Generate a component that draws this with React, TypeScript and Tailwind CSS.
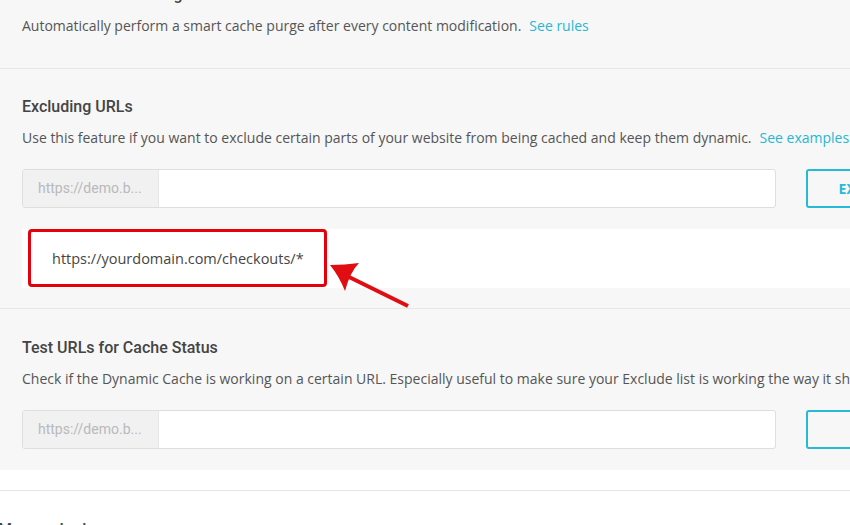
const SANS = "font-['Open_Sans',sans-serif]";

function UrlInput() {
  return (
    <div className="flex h-[39px] w-[754px] shrink-0 overflow-hidden rounded-[3px] border border-[#dedede] bg-white">
      <div className="flex w-[136px] items-center border-r border-[#e6e6e6] bg-[#f1f1f1] pl-[15px] font-['Roboto',sans-serif] text-[14px] text-[#b9b9b9]">
        https://demo.b...
      </div>
      <div className="flex-1" />
    </div>
  );
}

function OutlineButton({ label, width }: { label: string; width: string }) {
  return (
    <button
      className={`ml-[30px] flex h-[39px] shrink-0 items-center justify-center rounded-[3px] border-2 border-[#26bad6] font-['Open_Sans',sans-serif] text-[14px] font-bold tracking-wide text-[#26bad6] ${width}`}
    >
      {label}
    </button>
  );
}

export default function App() {
  return (
    <div className={`relative h-[525px] w-[850px] overflow-hidden bg-white ${SANS}`}>
      <div className="bg-[#f7f7f7]">
        {/* Automatic Cache Purge, scrolled up */}
        <section className="-mt-[15px] border-b border-[#e7e7e7] px-[22px] pb-[32px]">
          <h3 className="font-['Roboto',sans-serif] text-[16px] leading-[20px] font-medium text-[#444]">
            Automatic Cache Purge
          </h3>
          <p className="mt-[11px] text-[14px] leading-[20px] whitespace-nowrap text-[#555]">
            Automatically perform a smart cache purge after every content modification.
            <span className="ml-[8px] text-[#26b7d3]">See rules</span>
          </p>
        </section>

        <section className="border-b border-[#e7e7e7] pt-[28px] pb-[20px] pl-[22px]">
          <h3 className="font-['Roboto',sans-serif] text-[16px] leading-[20px] font-medium text-[#444]">
            Excluding URLs
          </h3>
          <p className="mt-[11px] text-[14px] leading-[20px] whitespace-nowrap text-[#555]">
            Use this feature if you want to exclude certain parts of your website from being cached and keep them dynamic.
            <span className="ml-[8px] text-[#26b7d3]">See examples</span>
          </p>
          <div className="mt-[21px] flex">
            <UrlInput />
            <OutlineButton label="EXCLUDE" width="w-[130px]" />
          </div>
          <div className="mt-[21px] flex h-[59px] items-center bg-white pl-[30px] text-[14.5px] font-medium text-[#454545]">
            https://yourdomain.com/checkouts/*
          </div>
        </section>

        <section className="pt-[29px] pb-[21px] pl-[22px]">
          <h3 className="font-['Roboto',sans-serif] text-[16px] leading-[20px] font-medium text-[#444]">
            Test URLs for Cache Status
          </h3>
          <p className="mt-[11px] text-[14px] leading-[20px] whitespace-nowrap text-[#555]">
            Check if the Dynamic Cache is working on a certain URL. Especially useful to make sure your Exclude list is working the way it should.
          </p>
          <div className="mt-[21px] flex">
            <UrlInput />
            <OutlineButton label="TEST" width="w-[160px]" />
          </div>
        </section>
      </div>

      <div className="mt-[20px] border-t border-[#e7e7e7] pt-[29px]">
        <h3 className="-ml-[2px] font-['Roboto',sans-serif] text-[16px] leading-[20px] font-medium text-[#444]">
          Memcached
        </h3>
      </div>

      {/* annotation overlay */}
      <div className="absolute top-[229px] left-[28px] h-[58px] w-[299px] rounded-[4px] border-[3px] border-[#e5000a]" />
      <svg className="absolute top-0 left-0" width="850" height="525" viewBox="0 0 850 525">
        <line x1="408" y1="306" x2="347" y2="276" stroke="#e00d12" strokeWidth="4" />
        <path d="M330 265 Q345 265 359 263 Q350 272 345 291 Q339 276 330 265 Z" fill="#e00d12" />
      </svg>
    </div>
  );
}
